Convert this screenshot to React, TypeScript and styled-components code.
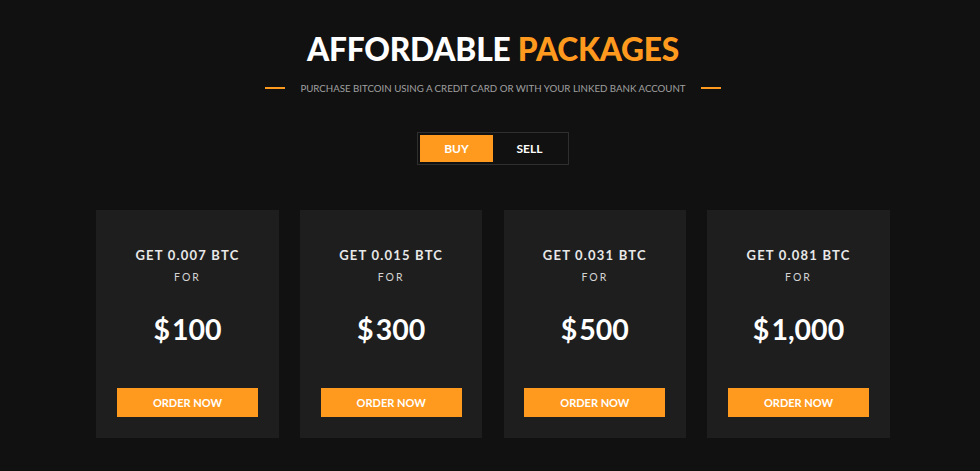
import React, { useState } from 'react';
import styled, { createGlobalStyle } from 'styled-components';

const GlobalStyle = createGlobalStyle`
    html, body {
        margin: 0;
        padding: 0;
        background: #111111;
        font-family: Lato, "Open Sans", sans-serif;
    }
`

const Page = styled.div`
    min-height: 471px;
    box-sizing: border-box;
    padding: 28px 0 0 6px;
    display: flex;
    flex-direction: column;
    align-items: center;
`

const Title = styled.h1`
    margin: 0;
    font-size: 31.7px;
    line-height: 42px;
    font-weight: 900;
    color: #ffffff;
    letter-spacing: -0.2px;
    span {
        color: #ff9a1f;
    }
`

const Subtitle = styled.div`
    margin-top: 12px;
    display: flex;
    align-items: center;
    gap: 15px;
    font-size: 9.7px;
    color: #a0a0a0;
    &::before, &::after {
        content: '';
        width: 20px;
        height: 2px;
        background: #ff9a1f;
    }
`

const Toggle = styled.div`
    margin-top: 38px;
    display: flex;
    padding: 2px;
    border: 1px solid #2f2f2f;
`

const ToggleButton = styled.button<{ $active: boolean }>`
    width: 73px;
    height: 27px;
    border: none;
    cursor: pointer;
    font-family: Lato, sans-serif;
    font-weight: 700;
    font-size: 12px;
    color: #ffffff;
    background: ${p => p.$active ? '#ff9a1f' : 'transparent'};
`

const Cards = styled.div`
    margin-top: 45px;
    display: grid;
    grid-template-columns: repeat(4, 182.5px);
    gap: 21.2px;
`

const Card = styled.div`
    background: #1e1e1e;
    height: 228px;
    box-sizing: border-box;
    padding: 37px 20px 0;
    display: flex;
    flex-direction: column;
    align-items: center;
`

const Amount = styled.div`
    font-size: 13px;
    line-height: 16px;
    font-weight: 700;
    color: #e8e8e8;
    letter-spacing: 1.2px;
`

const For = styled.div`
    margin-top: 8px;
    font-size: 10.5px;
    line-height: 12px;
    color: #d4d4d4;
    letter-spacing: 2px;
`

const Price = styled.div`
    margin-top: 27px;
    font-size: 28.5px;
    line-height: 38px;
    font-weight: 700;
    color: #ffffff;
    display: flex;
    align-items: baseline;
    gap: 2px;
`

const OrderButton = styled.button`
    margin-top: 40px;
    width: 141px;
    height: 29px;
    border: none;
    background: #ff9a1f;
    color: #ffffff;
    font-family: Lato, sans-serif;
    font-weight: 700;
    font-size: 11px;
    cursor: pointer;
`

const packages = [
    { btc: '0.007', price: '100' },
    { btc: '0.015', price: '300' },
    { btc: '0.031', price: '500' },
    { btc: '0.081', price: '1,000' },
]

const App: React.FC = () => {
    const [mode, setMode] = useState<'buy' | 'sell'>('buy')

    return (
        <Page>
            <GlobalStyle />
            <Title>AFFORDABLE <span>PACKAGES</span></Title>
            <Subtitle>
                <span>PURCHASE BITCOIN USING A CREDIT CARD OR WITH YOUR LINKED BANK ACCOUNT</span>
            </Subtitle>
            <Toggle>
                <ToggleButton $active={mode === 'buy'} onClick={() => setMode('buy')}>BUY</ToggleButton>
                <ToggleButton $active={mode === 'sell'} onClick={() => setMode('sell')}>SELL</ToggleButton>
            </Toggle>
            <Cards>
                {packages.map(p => (
                    <Card key={p.btc}>
                        <Amount>GET {p.btc} BTC</Amount>
                        <For>FOR</For>
                        <Price><span>$</span><span>{p.price}</span></Price>
                        <OrderButton>ORDER NOW</OrderButton>
                    </Card>
                ))}
            </Cards>
        </Page>
    )
}

export default App
